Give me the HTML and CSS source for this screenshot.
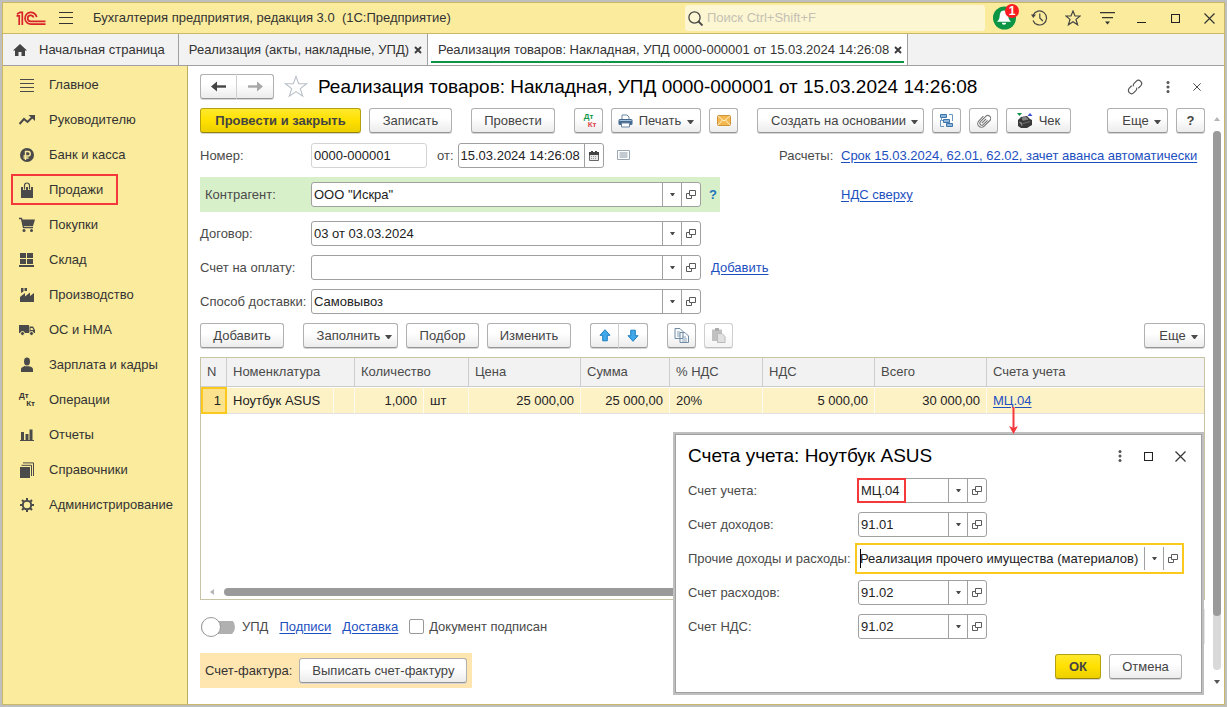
FILE: index.html
```html
<!DOCTYPE html>
<html lang="ru">
<head>
<meta charset="utf-8">
<title>Бухгалтерия предприятия, редакция 3.0</title>
<link rel="stylesheet" href="styles.css">
</head>
<body>
<svg class="sprite" aria-hidden="true">
  <symbol id="i-caret" viewBox="0 0 7 4"><path d="M0 0h7L4 4H3z" fill="#4a4a4a"/></symbol>
  <symbol id="i-down" viewBox="0 0 5 3"><path d="M0 0h5L3 3H2z" fill="#4a4a4a"/></symbol>
  <symbol id="i-open" viewBox="0 0 10 9"><path d="M3.500.500h6v5h-6zM3 3.500H.500v5h5V6" fill="none" stroke="#5a5a5a"/></symbol>
  <symbol id="i-close" viewBox="0 0 11 11"><path d="M.500.500l10 10M10.500.500l-10 10" fill="none" stroke="#333" stroke-width="1.200"/></symbol>
  <symbol id="i-tabx" viewBox="0 0 8 8"><path d="M1 1l6 6M7 1L1 7" fill="none" stroke="#3c3c3c" stroke-width="1.900"/></symbol>
  <symbol id="i-dots" viewBox="0 0 4 12"><g fill="#555"><circle cx="2" cy="1.500" r="1.500"/><circle cx="2" cy="6" r="1.500"/><circle cx="2" cy="10.500" r="1.500"/></g></symbol>
  <symbol id="i-square" viewBox="0 0 9 9"><path d="M.500.500h8v8h-8z" fill="none" stroke="#222" stroke-width="1.100"/></symbol>
</svg>

<div class="window">
  <header class="titlebar">
    <svg class="logo" width="30" height="15" viewBox="0 0 30 15" role="img" aria-label="1С"><path d="M.500 4.800H3.200V14M1 3.300 4 1.300H6.300V14M20.700 6.200A5.900 5.900 0 1 0 15 13.200H29.500M17.600 6.500A3 3 0 1 0 15 10.300H29.500" fill="none" stroke="#d8232a" stroke-width="1.700"/></svg>
    <button class="icon-btn menu" aria-label="Меню"><svg width="14" height="12" viewBox="0 0 14 12"><path d="M0 .500h14M0 5.500h14M0 11.500h14" stroke="#333"/></svg></button>
    <span class="app-name">Бухгалтерия предприятия, редакция 3.0&nbsp; (1С:Предприятие)</span>
    <label class="search">
      <svg width="15" height="15" viewBox="0 0 15 15" aria-hidden="true"><circle cx="6.500" cy="6.500" r="5.600" fill="none" stroke="#444" stroke-width="1.300"/><path d="M10.500 10.500l4 4" stroke="#444" stroke-width="1.800"/></svg>
      <input type="text" placeholder="Поиск Ctrl+Shift+F" aria-label="Поиск">
    </label>
    <div class="top-actions">
      <button class="icon-btn bell" aria-label="Уведомления"><svg width="26" height="27" viewBox="0 0 26 27"><circle cx="12.500" cy="15" r="11.500" fill="#0b9544"/><path d="M12 7.500c-3.500 0-4 3-4.300 5.500-.300 3-.900 4-2.700 5.700h14c-1.800-1.700-2.400-2.700-2.700-5.700C16 10.500 15.500 7.500 12 7.500zM9.800 19.700h4.400a2.200 2 0 0 1-4.400 0z" fill="#fff"/></svg><span class="badge">1</span></button>
      <button class="icon-btn" aria-label="История"><svg width="17" height="16" viewBox="0 0 17 16"><path d="M2.200 5A7 7 0 1 1 2 10.500M8.800 3.500V8l3 3" fill="none" stroke="#444" stroke-width="1.200"/><path d="M0 4.500h5L2.300 8z" fill="#444"/></svg></button>
      <button class="icon-btn" aria-label="Избранное"><svg width="16" height="16" viewBox="0 0 16 16"><path d="M8 1l2 5h5.200l-4.200 3.400 1.600 5.400L8 11.700l-4.600 3.100L5 9.400.800 6H6z" fill="none" stroke="#444" stroke-width="1.200"/></svg></button>
      <button class="icon-btn" aria-label="Настройки"><svg width="15" height="13" viewBox="0 0 15 13"><path d="M0 .600h15M2 5.600h11" stroke="#333" stroke-width="1.200"/><path d="M5 9.500h5l-2.500 3z" fill="#333"/></svg></button>
      <button class="icon-btn" aria-label="Свернуть"><svg width="9" height="10" viewBox="0 0 9 10"><path d="M0 9.500h9" stroke="#222" stroke-width="1"/></svg></button>
      <button class="icon-btn" aria-label="Развернуть"><svg width="9" height="9"><use href="#i-square"/></svg></button>
      <button class="icon-btn" aria-label="Закрыть"><svg width="11" height="11"><use href="#i-close"/></svg></button>
    </div>
  </header>

  <nav class="tabs" aria-label="Открытые окна">
    <a class="tab home" href="#home"><svg width="14" height="12" viewBox="0 0 14 12"><path d="M7 0L0 6.500h2V12h3.500V8h3v4H12V6.500h2z" fill="#444"/></svg><span>Начальная страница</span></a>
    <a class="tab" href="#list"><span>Реализация (акты, накладные, УПД)</span><svg width="8" height="8"><use href="#i-tabx"/></svg></a>
    <a class="tab active" href="#doc"><span>Реализация товаров: Накладная, УПД 0000-000001 от 15.03.2024 14:26:08</span><svg width="8" height="8"><use href="#i-tabx"/></svg></a>
  </nav>

  <div class="body">
    <aside class="sidebar">
      <a href="#main"><svg viewBox="0 0 16 16"><path d="M1 2.500h14M1 6.500h14M1 10.500h14M1 14.500h14" stroke="#4a4a4a"/></svg>Главное</a>
      <a href="#boss"><svg viewBox="0 0 16 16"><path d="M.500 12L5 7l3.500 3L13 5.500" fill="none" stroke="#4a4a4a" stroke-width="2"/><path d="M9.500 3H16v6z" fill="#4a4a4a"/></svg>Руководителю</a>
      <a href="#bank"><svg viewBox="0 0 16 16"><circle cx="8" cy="8" r="7" fill="#4a4a4a"/><path d="M6.500 13V4.500H9a2.200 2.200 0 0 1 0 4.500H4.500M4.500 11H9.500" fill="none" stroke="#faeb9d" stroke-width="1.400"/></svg>Банк и касса</a>
      <a href="#sales" class="marked"><svg viewBox="0 0 16 16"><path d="M2 5h12v11H2z" fill="#4a4a4a"/><path d="M5.500 8V3.500a2.500 2.500 0 0 1 5 0V8" fill="none" stroke="#faeb9d" stroke-width="3"/><path d="M5.500 7.500V3.500a2.500 2.500 0 0 1 5 0v4" fill="none" stroke="#4a4a4a" stroke-width="1.200"/></svg>Продажи</a>
      <a href="#buy"><svg viewBox="0 0 16 16"><path d="M0 1.500h2.500l2 9H14" fill="none" stroke="#4a4a4a" stroke-width="1.300"/><path d="M2.500 2.500H16L14 9H4z" fill="#4a4a4a"/><circle cx="5" cy="13.500" r="1.500" fill="#4a4a4a"/><circle cx="12.500" cy="13.500" r="1.500" fill="#4a4a4a"/></svg>Покупки</a>
      <a href="#stock"><svg viewBox="0 0 16 16"><path d="M1 1h6v5H1zM8 1h6v5H8zM1 7h6v5H1zM8 7h6v5H8zM0 13h15v2H0z" fill="#4a4a4a"/></svg>Склад</a>
      <a href="#prod"><svg viewBox="0 0 16 16"><path d="M1 15V10l5-4v3.500l5-4V9l4-3v9zM2 6V1h2.500v3.500zM5.500 4V1H8v3z" fill="#4a4a4a"/></svg>Производство</a>
      <a href="#os"><svg viewBox="0 0 16 16"><path d="M0 3h10v8H0zM10.500 4.500H14l2 3.500v3h-5.500z" fill="#4a4a4a"/><path d="M11.500 6h2l1 2h-3z" fill="#faeb9d"/><g fill="#4a4a4a" stroke="#faeb9d"><circle cx="3.500" cy="11.500" r="2"/><circle cx="12.500" cy="11.500" r="2"/></g></svg>ОС и НМА</a>
      <a href="#hr"><svg viewBox="0 0 16 16"><ellipse cx="8" cy="4.500" rx="3" ry="3.900" fill="#4a4a4a"/><path d="M2 15v-2.500C2 10 5 9.700 6 9.300h4c1 .400 4 .700 4 3.200V15z" fill="#4a4a4a"/></svg>Зарплата и кадры</a>
      <a href="#ops"><span class="dtkt"><b>Дт</b><b>Кт</b></span>Операции</a>
      <a href="#reports"><svg viewBox="0 0 16 16"><path d="M1 13h14v1H1zM2 5h3v8H2zM6.500 7h3v6h-3zM10.500 2.500h3V13h-3z" fill="#4a4a4a"/></svg>Отчеты</a>
      <a href="#refs"><svg viewBox="0 0 16 16"><path d="M1 5h10v11H1z" fill="#4a4a4a"/><path d="M2.500 3.300h10V14M4 .900h10.500V14" fill="none" stroke="#4a4a4a"/></svg>Справочники</a>
      <a href="#admin"><svg viewBox="0 0 16 16"><circle cx="8" cy="8" r="4.200" fill="none" stroke="#4a4a4a" stroke-width="2"/><path d="M8 1v3M8 12v3M1 8h3M12 8h3M3 3l2 2M11 11l2 2M13 3l-2 2M5 11l-2 2" stroke="#4a4a4a" stroke-width="2"/></svg>Администрирование</a>
    </aside>

    <main class="main">
      <div class="content">
        <div class="doc-head">
          <div class="pair nav">
            <button class="btn" aria-label="Назад"><svg width="15" height="11" viewBox="0 0 15 11"><path d="M3 5.500h12" stroke="#444" stroke-width="2.400"/><path d="M0 5.500L6 .500v10z" fill="#444"/></svg></button>
            <button class="btn" aria-label="Вперед"><svg width="15" height="11" viewBox="0 0 15 11"><path d="M0 5.500h12" stroke="#a8a8a8" stroke-width="2.400"/><path d="M15 5.500L9 .500v10z" fill="#a8a8a8"/></svg></button>
          </div>
          <button class="icon-btn" aria-label="В избранное"><svg width="24" height="23" viewBox="0 0 24 23"><path d="M12 1.500l2.700 7.300h7.900l-6.300 4.800 2.400 7.600L12 16.600l-6.700 4.600 2.400-7.600L1.400 8.800h7.900z" fill="#fff" stroke="#b9c0c8" stroke-width="1.100"/></svg></button>
          <h1>Реализация товаров: Накладная, УПД 0000-000001 от 15.03.2024 14:26:08</h1>
          <div class="head-actions">
            <button class="icon-btn" aria-label="Ссылка"><svg width="16" height="16" viewBox="0 0 16 16"><g transform="rotate(-45 8 8)" fill="none" stroke="#555" stroke-width="1.200"><path d="M6.500 4.800H3.200a3.200 3.200 0 0 0 0 6.400H6a3.200 3.200 0 0 0 2.700-1.600M9.500 11.200h3.300a3.200 3.200 0 0 0 0-6.400H10a3.200 3.200 0 0 0-2.700 1.600"/></g></svg></button>
            <button class="icon-btn" aria-label="Еще действия"><svg width="4" height="12"><use href="#i-dots"/></svg></button>
            <button class="icon-btn" aria-label="Закрыть документ"><svg width="8" height="8"><use href="#i-close"/></svg></button>
          </div>
        </div>

        <div class="toolbar doc-tools">
          <button class="btn primary w161">Провести и закрыть</button>
          <button class="btn w83">Записать</button>
          <button class="btn w84 apart">Провести</button>
          <button class="btn square apart" aria-label="Проводки"><span class="dtkt colored"><b>Дт</b><b>Кт</b></span></button>
          <button class="btn w90"><svg width="15" height="14" viewBox="0 0 15 14"><path d="M4 1h5l2 2v3H4z" fill="#fff" stroke="#6b86a3"/><rect x=".500" y="5" width="14" height="6" rx="1.500" fill="#46698f"/><path d="M1.500 6.500h12" stroke="#a6c4e0"/><path d="M3.500 9h8v4h-8z" fill="#fff" stroke="#6b86a3"/></svg>Печать<svg class="caret"><use href="#i-caret"/></svg></button>
          <button class="btn square" aria-label="Письмо"><svg width="14" height="11" viewBox="0 0 14 11"><rect x=".500" y=".500" width="13" height="10" rx="1" fill="#f3b851" stroke="#cf9236"/><path d="M1 1l6 5 6-5M1 10l4.500-5M13 10L8.500 5" fill="none" stroke="#fff0c8"/></svg></button>
          <button class="btn menu-btn w167 apart">Создать на основании<svg class="caret"><use href="#i-caret"/></svg></button>
          <button class="btn square" aria-label="Структура подчиненности"><svg width="15" height="15" viewBox="0 0 15 15"><g fill="#8db6dc" stroke="#3f74a8"><path d="M1.500 1.500h6v3h-6zM4.500 6.500h6v3h-6zM7.500 10.500h6v3h-6z"/></g><path d="M10 1.500h3.500V8M1.500 7v6.500H5M2.500 4.500v3H4" fill="none" stroke="#6a97c0"/></svg></button>
          <button class="btn square" aria-label="Присоединенные файлы"><svg width="14" height="14" viewBox="0 0 14 14"><g transform="rotate(45 7 7)" fill="none" stroke="#777" stroke-width="1.100"><path d="M9 4v6a2 2 0 0 1-4 0V2.500a2.800 2.800 0 0 1 5.800 0V10.500a3.800 3.800 0 0 1-7.600 0V4M7 4v6"/></g></svg></button>
          <button class="btn w65"><svg width="16" height="15" viewBox="0 0 16 15"><path d="M0 0h5L2.500 3z" fill="#0b9544"/><path d="M10.500 3h5L13 0z" fill="#3a50d0"/><path d="M4 4l6-1 3 3 2 1v5l-5 3H4l-3-2V7z" fill="#3a3a3a"/><path d="M5 5l4-.700 2 2-5 1zM2 9l3 1v3M6 10.500l7-2" fill="#888" stroke="#999" stroke-width=".600"/></svg>Чек</button>
          <button class="btn menu-btn w61 push">Еще<svg class="caret"><use href="#i-caret"/></svg></button>
          <button class="btn square"><b>?</b></button>
        </div>

        <div class="row">
          <div class="line">
            <label class="lbl" for="num">Номер:</label>
            <div class="field faint num"><input id="num" value="0000-000001"></div>
            <label for="date">от:</label>
            <div class="field date"><input id="date" value="15.03.2024 14:26:08"><button aria-label="Календарь"><svg width="10" height="10" viewBox="0 0 10 10"><path d="M.500 1.500h9v8h-9z" fill="#e8e8e8" stroke="#666"/><path d="M0 1h10v3H0zM2 0h2v2H2zM6 0h2v2H6z" fill="#444"/><path d="M2 5.500h6M2 7.500h6" stroke="#999" stroke-dasharray="1 1"/></svg></button></div>
            <svg width="13" height="11" viewBox="0 0 13 11"><path d="M.500.500h12v9h-12z" fill="#fff" stroke="#9aa8b5"/><path d="M2.500 3h8M2.500 5h8M2.500 7h8" stroke="#8795a3"/></svg>
          </div>
          <span>Расчеты:</span>
          <a class="link" href="#terms">Срок 15.03.2024, 62.01, 62.02, зачет аванса автоматически</a>
        </div>
        <div class="row">
          <div class="line green">
            <label class="lbl" for="partner">Контрагент:</label>
            <div class="field wide"><input id="partner" value="ООО &quot;Искра&quot;"><button aria-label="Выбрать"><svg width="5" height="3"><use href="#i-down"/></svg></button><button aria-label="Открыть"><svg width="10" height="9"><use href="#i-open"/></svg></button></div>
            <a class="help" href="#help">?</a>
          </div>
          <span></span>
          <a class="link" href="#vat">НДС сверху</a>
        </div>
        <div class="line">
          <label class="lbl" for="contract">Договор:</label>
          <div class="field wide"><input id="contract" value="03 от 03.03.2024"><button aria-label="Выбрать"><svg width="5" height="3"><use href="#i-down"/></svg></button><button aria-label="Открыть"><svg width="10" height="9"><use href="#i-open"/></svg></button></div>
        </div>
        <div class="line">
          <label class="lbl" for="invoice">Счет на оплату:</label>
          <div class="field wide"><input id="invoice" value=""><button aria-label="Выбрать"><svg width="5" height="3"><use href="#i-down"/></svg></button><button aria-label="Открыть"><svg width="10" height="9"><use href="#i-open"/></svg></button></div>
          <a class="link" href="#add">Добавить</a>
        </div>
        <div class="line">
          <label class="lbl" for="delivery">Способ доставки:</label>
          <div class="field wide"><input id="delivery" value="Самовывоз"><button aria-label="Выбрать"><svg width="5" height="3"><use href="#i-down"/></svg></button><button aria-label="Открыть"><svg width="10" height="9"><use href="#i-open"/></svg></button></div>
        </div>

        <div class="toolbar">
          <button class="btn w84">Добавить</button>
          <button class="btn menu-btn w95 apart">Заполнить<svg class="caret"><use href="#i-caret"/></svg></button>
          <button class="btn w73">Подбор</button>
          <button class="btn w84">Изменить</button>
          <div class="pair apart">
            <button class="btn" aria-label="Вверх"><svg width="12" height="13" viewBox="0 0 12 13"><path d="M6 .700l5 5.600H8.300v5.500H3.700V6.300H1z" fill="#3fa9ea" stroke="#1f7fc0"/></svg></button>
            <button class="btn" aria-label="Вниз"><svg width="12" height="13" viewBox="0 0 12 13"><path d="M6 12.300L1 6.700h2.700V1.200h4.600v5.500H11z" fill="#3fa9ea" stroke="#1f7fc0"/></svg></button>
          </div>
          <button class="btn square apart" aria-label="Копировать"><svg width="15" height="15" viewBox="0 0 15 15"><path d="M1 .500h5L9 3.500v7H1zM6 4.500h5l3.500 3.500v6.500H6z" fill="#f6fafd" stroke="#718ba3"/><path d="M3 4h3M3 6h3M3 8h3M8 9h4M8 11h5M8 13h5" stroke="#90a5b8"/></svg></button>
          <button class="btn square" disabled aria-label="Вставить"><svg width="15" height="15" viewBox="0 0 15 15"><path d="M1 1.500h10V13H1z" fill="#999"/><path d="M4 0h4v3H4z" fill="#777"/><path d="M6.500 5.500H11l3 3v6H6.500z" fill="#ccc" stroke="#8c8c8c"/></svg></button>
          <button class="btn menu-btn w61 push">Еще<svg class="caret"><use href="#i-caret"/></svg></button>
        </div>

        <div class="grid-box">
          <table>
            <colgroup><col class="c26"><col class="c107"><col class="c21"><col class="c69"><col class="c45"><col class="c112"><col class="c89"><col class="c93"><col class="c112"><col class="c112"><col></colgroup>
            <thead><tr><th>N</th><th colspan="2">Номенклатура</th><th colspan="2">Количество</th><th>Цена</th><th>Сумма</th><th>% НДС</th><th>НДС</th><th>Всего</th><th>Счета учета</th></tr></thead>
            <tbody><tr><td class="num current">1</td><td>Ноутбук ASUS</td><td></td><td class="num">1,000</td><td>шт</td><td class="num">25 000,00</td><td class="num">25 000,00</td><td>20%</td><td class="num">5 000,00</td><td class="num">30 000,00</td><td><span class="pointer"><a class="link" href="#accounts">МЦ.04</a><svg width="9" height="27" viewBox="0 0 9 27" aria-hidden="true"><path d="M4.500 0v22" stroke="#f5383b" stroke-width="2"/><path d="M0 19l4.500 2L9 19 4.500 27z" fill="#f5383b"/></svg></span></td></tr></tbody>
          </table>
          <div class="hscroll"><svg width="4" height="6" viewBox="0 0 4 6"><path d="M4 0v6L0 3z" fill="#b5b5b5"/></svg><i></i></div>
        </div>

        <div class="options">
          <label class="switch"><input type="checkbox"><span>УПД</span></label>
          <a class="link" href="#sign">Подписи</a>
          <a class="link" href="#ship">Доставка</a>
          <label class="check"><input type="checkbox"><span>Документ подписан</span></label>
          <div class="comment"></div>
        </div>

        <div class="sf"><span>Счет-фактура:</span><button class="btn w168">Выписать счет-фактуру</button></div>
      </div>
      <div class="vscroll"><svg width="6" height="4" viewBox="0 0 6 4"><path d="M0 4h6L3 0z" fill="#b5b5b5"/></svg><div><i></i></div><svg width="6" height="4" viewBox="0 0 6 4"><path d="M0 0h6L3 4z" fill="#555"/></svg></div>
    </main>
  </div>

  <section class="dialog" role="dialog" aria-labelledby="dlg-title">
    <div class="dlg-head">
      <h2 id="dlg-title">Счета учета: Ноутбук ASUS</h2>
      <button class="icon-btn" aria-label="Еще"><svg width="4" height="12"><use href="#i-dots"/></svg></button>
      <button class="icon-btn" aria-label="Развернуть"><svg width="9" height="9"><use href="#i-square"/></svg></button>
      <button class="icon-btn" aria-label="Закрыть"><svg width="11" height="11"><use href="#i-close"/></svg></button>
    </div>
    <div class="line">
      <label class="lbl" for="a1">Счет учета:</label>
      <div class="field account flagged"><input id="a1" value="МЦ.04"><button aria-label="Выбрать"><svg width="5" height="3"><use href="#i-down"/></svg></button><button aria-label="Открыть"><svg width="10" height="9"><use href="#i-open"/></svg></button></div>
    </div>
    <div class="line">
      <label class="lbl" for="a2">Счет доходов:</label>
      <div class="field account"><input id="a2" value="91.01"><button aria-label="Выбрать"><svg width="5" height="3"><use href="#i-down"/></svg></button><button aria-label="Открыть"><svg width="10" height="9"><use href="#i-open"/></svg></button></div>
    </div>
    <div class="line">
      <label class="lbl" for="a3">Прочие доходы и расходы:</label>
      <div class="field focused"><input id="a3" value="Реализация прочего имущества (материалов)"><button aria-label="Выбрать"><svg width="5" height="3"><use href="#i-down"/></svg></button><button aria-label="Открыть"><svg width="10" height="9"><use href="#i-open"/></svg></button></div>
    </div>
    <div class="line">
      <label class="lbl" for="a4">Счет расходов:</label>
      <div class="field account"><input id="a4" value="91.02"><button aria-label="Выбрать"><svg width="5" height="3"><use href="#i-down"/></svg></button><button aria-label="Открыть"><svg width="10" height="9"><use href="#i-open"/></svg></button></div>
    </div>
    <div class="line">
      <label class="lbl" for="a5">Счет НДС:</label>
      <div class="field account"><input id="a5" value="91.02"><button aria-label="Выбрать"><svg width="5" height="3"><use href="#i-down"/></svg></button><button aria-label="Открыть"><svg width="10" height="9"><use href="#i-open"/></svg></button></div>
    </div>
    <div class="dlg-foot"><button class="btn primary">ОК</button><button class="btn w73">Отмена</button></div>
  </section>
</div>
</body>
</html>
```
FILE: styles.css
```css
*, *::before, *::after { box-sizing: border-box; }
body {
  margin: 0;
  padding: 2px;
  min-height: 100vh;
  display: flex;
  background: #bfbfbf;
  color: #4a4a4a;
  font: 13px/16px "Liberation Sans", Arial, sans-serif;
}
svg { flex: none; display: block; }
button, input { font: inherit; color: inherit; margin: 0; }
.sprite { position: absolute; width: 0; height: 0; }
.window {
  position: relative;
  flex: 1;
  min-width: 0;
  display: flex;
  flex-direction: column;
  border: 1px solid #cbb866;
  background: #fff;
}
.icon-btn { border: 0; padding: 0; background: none; display: flex; justify-content: center; }

/* title bar */
.titlebar {
  display: flex;
  align-items: center;
  height: 31px;
  padding: 0 2px 0 13px;
  background: #faeb9d;
  border-bottom: 1px solid #cbb866;
}
.menu { margin-left: 13px; }
.app-name { margin-left: 20px; color: #333; }
.search {
  display: flex;
  align-items: center;
  gap: 4px;
  width: 300px;
  height: 26px;
  margin-left: auto;
  padding-left: 3px;
  background: #fdf6d2;
  border-radius: 3px;
}
.search input { flex: 1; min-width: 0; border: 0; padding: 0; background: none; outline: 0; }
.search input::placeholder { color: #c4c1b4; opacity: 1; }
.top-actions { display: flex; align-items: center; gap: 8px; margin-left: 7px; }
.top-actions .icon-btn { width: 26px; }
.bell { position: relative; margin-top: -4px; }
.badge {
  position: absolute;
  top: 1px;
  right: -1px;
  width: 14px;
  height: 14px;
  border-radius: 7px;
  background: #fb1c22;
  color: #fff;
  font: bold 12px/14px "Liberation Sans", Arial, sans-serif;
  text-align: center;
}

/* tabs */
.tabs { display: flex; height: 32px; background: #f2f2f2; border-bottom: 1px solid #a0a0a0; }
.tab {
  position: relative;
  display: flex;
  align-items: center;
  gap: 5px;
  padding: 0 5px 0 10px;
  border-right: 1px solid #a0a0a0;
  color: #333;
  text-decoration: none;
  white-space: nowrap;
}
.tab.home { gap: 12px; padding-right: 13px; }
.tab.active { background: #fff; }
.tab.active::after { content: ""; position: absolute; left: 3px; right: 3px; bottom: 2px; height: 2px; background: #0b9544; }

/* sidebar */
.body { flex: 1; display: flex; }
.sidebar { flex: none; width: 185px; padding-top: 1px; background: #faeb9d; border-right: 1px solid #bfae62; }
.sidebar a { position: relative; display: flex; align-items: center; gap: 14px; height: 35px; padding-left: 16px; color: #333; text-decoration: none; }
.sidebar a > svg { width: 16px; height: 16px; }
.marked::after { content: ""; position: absolute; left: 8px; top: 2px; width: 107px; height: 31px; border: 2px solid #f5383b; }
.dtkt { display: flex; flex-direction: column; width: 16px; font-size: 8px; line-height: 8px; }
.dtkt b:last-child { align-self: flex-end; }
.colored b:first-child { color: #159a4c; }
.colored b:last-child { color: #e0474a; }

/* document */
.main { flex: 1; min-width: 0; display: flex; }
.content { flex: 1; min-width: 0; display: flex; flex-direction: column; gap: 9px; padding: 8px 0 16px 12px; }
.doc-head { display: flex; align-items: center; height: 25px; }
.doc-head > .icon-btn { margin-left: 10px; }
h1, h2 { margin: 0; font-size: 19px; line-height: 24px; font-weight: normal; color: #000; white-space: nowrap; }
h1 { margin-left: 10px; }
.head-actions { display: flex; align-items: center; gap: 23px; margin-left: auto; padding-right: 4px; }
.toolbar { display: flex; gap: 8px; }
.doc-tools { padding-bottom: 1px; }
.btn {
  flex: none;
  display: flex;
  align-items: center;
  justify-content: center;
  gap: 6px;
  height: 25px;
  padding: 0;
  border: 1px solid #b0b0b0;
  border-bottom-color: #959595;
  border-radius: 3px;
  background: linear-gradient(#fff 40%, #ececec);
  box-shadow: 0 1px 0 #d5d5d5;
  color: #444;
  white-space: nowrap;
}
.btn:disabled { opacity: .6; }
.menu-btn { padding-left: 8px; gap: 5px; }
.primary { background: linear-gradient(#ffe92e, #ffe000 50%, #ecd000); border-color: #b5a010; border-bottom-color: #94830a; font-weight: bold; }
.caret { width: 7px; height: 4px; margin-top: 2px; }
.square { width: 29px; }
.apart { margin-left: 11px; }
.push { margin-left: auto; }
.pair { display: flex; }
.pair .btn { width: 29px; }
.pair.nav .btn { width: 37px; }
.pair .btn:first-child { border-radius: 3px 0 0 3px; border-right-color: #d0d0d0; }
.pair .btn:last-child { border-radius: 0 3px 3px 0; border-left: 0; }
.w61 { width: 61px; } .w65 { width: 65px; } .w73 { width: 73px; }
.w83 { width: 83px; } .w84 { width: 84px; } .w90 { width: 90px; }
.w95 { width: 95px; } .w161 { width: 161px; } .w167 { width: 167px; } .w168 { width: 168px; }

/* form */
.row { display: grid; grid-template-columns: 579px 62px 1fr; align-items: center; white-space: nowrap; }
.line { display: flex; align-items: center; gap: 10px; }
.lbl { flex: none; width: 111px; margin-right: -10px; white-space: nowrap; }
.green { width: 520px; padding: 5px 0 5px 5px; background: #d8f0ca; }
.green .lbl { width: 106px; }
.help { color: #1b75bc; text-decoration: none; font-weight: bold; margin-left: -2px; }
.link { color: #1c4fc0; text-decoration: underline; text-underline-offset: 2px; }
.field { display: flex; height: 25px; border: 1px solid #a0a0a0; border-radius: 3px; background: #fff; color: #222; }
.field input { flex: 1; min-width: 0; width: 0; border: 0; padding: 0 2px; background: none; outline: 0; }
.field button { flex: none; display: flex; align-items: center; justify-content: center; width: 19px; padding: 0; border: 0; border-left: 1px solid #a0a0a0; background: none; }
.faint { border-color: #d4d4d4; }
.num.field { width: 116px; }
.date { width: 146px; margin-left: -6px; }
.date + svg { margin-left: 3px; }
.wide { width: 390px; }

/* items table */
.grid-box { flex: 1; display: flex; flex-direction: column; border: 1px solid #c9c5a4; min-height: 160px; }
table { width: 100%; table-layout: fixed; border-collapse: separate; border-spacing: 0; }
th, td { padding: 0 6px; text-align: left; font-weight: normal; white-space: nowrap; }
th { height: 29px; background: #f2f2f2; border-right: 1px solid #cdcdcd; border-bottom: 1px solid #cdcdcd; }
td { height: 27px; background: #fdf1c6; border-right: 1px solid #fffaf0; border-top: 1px solid #fff; border-bottom: 1px solid #e0e0e0; color: #222; }
th:last-child, td:last-child { border-right: 0; }
td.num { text-align: right; }
td.current { background: #fde28d; border: 2px solid #fbc81e; padding: 0 4px; }
.c21 { width: 21px; } .c26 { width: 26px; } .c45 { width: 45px; } .c69 { width: 69px; }
.c89 { width: 89px; } .c93 { width: 93px; } .c107 { width: 107px; } .c112 { width: 112px; }
.pointer { position: relative; }
.pointer svg { position: absolute; left: 16px; top: 14px; z-index: 3; }
.hscroll { display: flex; align-items: center; gap: 10px; margin-top: auto; padding: 3px 9px; }
.hscroll i { flex: 1; height: 8px; border-radius: 4px; background: #9a9a9a; }

.options { display: flex; align-items: center; gap: 11px; height: 35px; }
.switch, .check { display: flex; align-items: center; gap: 7px; }
.switch input { appearance: none; position: relative; width: 34px; height: 20px; background: linear-gradient(#b0b0b0, #b0b0b0) 0 4px / 34px 13px no-repeat; border-radius: 10px; margin-left: 1px; }
.switch input::before { content: ""; position: absolute; left: 0; top: 0; width: 20px; height: 20px; border: 1px solid #999; border-radius: 50%; background: #fff; }
.check { gap: 5px; }
.check input { appearance: none; width: 15px; height: 15px; border: 1px solid #999; border-radius: 2px; background: #fff; }
.comment { width: 200px; height: 35px; margin-left: auto; background: #e4e4e4; }
.sf { display: flex; align-items: center; align-self: flex-start; gap: 7px; padding: 5px; background: #ffe5b0; color: #333; }

.vscroll { width: 19px; padding: 51px 3px 20px 8px; display: flex; flex-direction: column; align-items: center; gap: 10px; }
.vscroll div { flex: 1; width: 8px; border-radius: 4px; background: #d9d9d9; }
.vscroll i { display: block; height: 90%; border-radius: 4px; background: #9a9a9a; }

/* dialog */
.dialog {
  position: absolute;
  right: 22px;
  bottom: 11px;
  z-index: 2;
  width: 527px;
  display: flex;
  flex-direction: column;
  gap: 9px;
  padding: 8px 15px 13px 12px;
  background: #fff;
  border: 1px solid #a0a0a0;
  outline: 2px solid #bfbfbf;
}
.dlg-head { display: flex; align-items: center; height: 26px; gap: 22px; }
.dlg-head h2 { margin-right: auto; }
.dialog .lbl { width: 170px; }
.account { width: 129px; }
.focused { width: 329px; height: 31px; margin: -3px 0 -3px -3px; border: 2px solid #fbc81e; border-radius: 0; padding: 2px 0; }
.focused input { box-shadow: inset 1px 0 0 #000; margin: 2px 0 2px 3px; padding: 0; }
.flagged { position: relative; }
.flagged::after { content: ""; position: absolute; left: -2px; top: -1px; width: 49px; height: 25px; border: 2px solid #f5383b; }
.dlg-foot { display: flex; justify-content: flex-end; gap: 8px; padding: 6px 4px 0 0; }
.dlg-foot .primary { width: 46px; }
```
